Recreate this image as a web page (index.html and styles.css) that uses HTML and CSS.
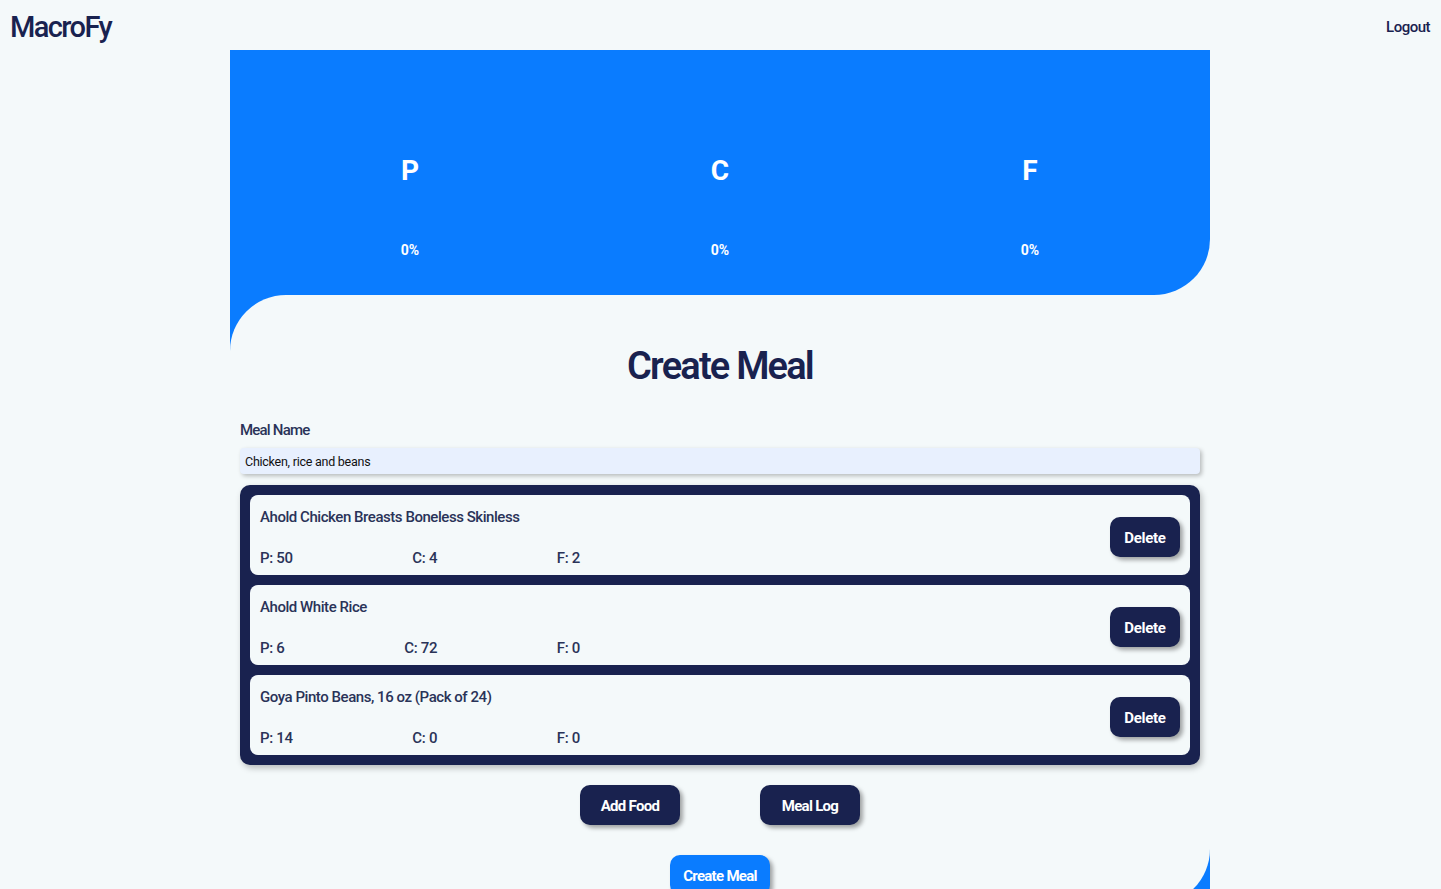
FILE: index.html
```html
<!DOCTYPE html>
<html lang="en">
<head>
<meta charset="utf-8">
<title>MacroFy</title>
<link rel="stylesheet" href="styles.css">
</head>
<body>
<nav class="nav">
  <div class="brand">MacroFy</div>
  <a class="logout" href="#">Logout</a>
</nav>
<main class="wrap">
  <section class="hero">
    <div class="macro"><div class="macro-letter">P</div><div class="macro-pct">0%</div></div>
    <div class="macro"><div class="macro-letter">C</div><div class="macro-pct">0%</div></div>
    <div class="macro"><div class="macro-letter">F</div><div class="macro-pct">0%</div></div>
  </section>
  <section class="panel-bg">
    <div class="panel">
      <h1 class="title">Create Meal</h1>
      <form class="form">
        <label class="label" for="mealName">Meal Name</label>
        <input class="input" id="mealName" type="text" value="Chicken, rice and beans">
        <div class="list">
          <div class="item">
            <div class="item-info">
              <div class="item-name">Ahold Chicken Breasts Boneless Skinless</div>
              <div class="item-macros"><span>P: 50</span><span>C: 4</span><span>F: 2</span></div>
            </div>
            <button class="btn btn-dark btn-del" type="button">Delete</button>
          </div>
          <div class="item">
            <div class="item-info">
              <div class="item-name">Ahold White Rice</div>
              <div class="item-macros"><span>P: 6</span><span>C: 72</span><span>F: 0</span></div>
            </div>
            <button class="btn btn-dark btn-del" type="button">Delete</button>
          </div>
          <div class="item">
            <div class="item-info">
              <div class="item-name">Goya Pinto Beans, 16 oz (Pack of 24)</div>
              <div class="item-macros"><span>P: 14</span><span>C: 0</span><span>F: 0</span></div>
            </div>
            <button class="btn btn-dark btn-del" type="button">Delete</button>
          </div>
        </div>
        <div class="actions">
          <button class="btn btn-dark btn-wide" type="button">Add Food</button>
          <button class="btn btn-dark btn-wide" type="button">Meal Log</button>
        </div>
        <div class="submit-row">
          <button class="btn btn-blue btn-wide" type="submit">Create Meal</button>
        </div>
      </form>
    </div>
  </section>
</main>
</body>
</html>
```
FILE: styles.css
```css
* { box-sizing: border-box; }

html, body {
  margin: 0;
  padding: 0;
}

body {
  background: #f4f9fa;
  color: #19224f;
  font-family: "Roboto", "Liberation Sans", sans-serif;
}

.nav {
  height: 50px;
  display: flex;
  align-items: center;
  justify-content: space-between;
  padding: 4px 11px 0 10px;
}

.brand {
  font-size: 29px;
  font-weight: 500;
  line-height: 36px;
  letter-spacing: -1.6px;
  color: #19224f;
}

.logout {
  font-size: 15px;
  font-weight: 500;
  letter-spacing: -0.5px;
  color: #19224f;
  text-decoration: none;
}

.wrap {
  width: 980px;
  margin-left: calc(50% - 490.5px);
}

.hero {
  height: 245px;
  background: #0a7cff;
  border-bottom-right-radius: 56px;
  display: grid;
  grid-template-columns: repeat(3, 1fr);
  padding: 107px 25px 0;
}

.macro {
  display: flex;
  flex-direction: column;
  align-items: center;
  gap: 58px;
  color: #ffffff;
  font-weight: 700;
}

.macro-letter {
  font-size: 28px;
  line-height: 28px;
}

.macro-pct {
  font-size: 14px;
  line-height: 14px;
}

.panel-bg {
  background: #0a7cff;
}

.panel {
  background: #f4f9fa;
  border-top-left-radius: 56px;
  border-bottom-right-radius: 56px;
  padding: 48px 10px 10px;
}

.title {
  margin: 0;
  text-align: center;
  font-size: 38px;
  line-height: 46px;
  font-weight: 600;
  letter-spacing: -1.8px;
  color: #19224f;
}

.form {
  display: flex;
  flex-direction: column;
  margin-top: 32px;
}

.label {
  font-size: 15px;
  line-height: 18px;
  font-weight: 500;
  letter-spacing: -0.8px;
  color: #2a3358;
}

.input {
  margin-top: 9px;
  height: 26px;
  border: none;
  border-radius: 4px;
  background: #e8f0fe;
  padding: 1px 5px 0;
  font-family: "Roboto", "Liberation Sans", sans-serif;
  font-size: 12.5px;
  letter-spacing: -0.25px;
  color: #111;
  box-shadow: 2px 2px 4px rgba(0, 0, 0, 0.25);
  outline: none;
}

.list {
  margin-top: 11px;
  background: #19224f;
  border-radius: 10px;
  padding: 10px;
  display: flex;
  flex-direction: column;
  gap: 10px;
  box-shadow: 2px 3px 6px rgba(0, 0, 0, 0.25);
}

.item {
  height: 80px;
  background: #f4f9fa;
  border-radius: 8px;
  padding: 13px 10px 9px;
  display: flex;
  align-items: center;
  justify-content: space-between;
}

.item-info {
  display: flex;
  flex-direction: column;
  gap: 22px;
  align-self: flex-start;
}

.item-name,
.item-macros {
  font-size: 15px;
  line-height: 19px;
  font-weight: 500;
  color: #2a3358;
}

.item-name {
  letter-spacing: -0.45px;
}

.item-macros {
  width: 320px;
  display: flex;
  justify-content: space-between;
  letter-spacing: -0.3px;
}

.btn {
  border: none;
  font-family: "Roboto", "Liberation Sans", sans-serif;
  font-weight: 700;
  font-size: 15px;
  color: #ffffff;
  border-radius: 10px;
  cursor: pointer;
  box-shadow: 3px 3px 4px rgba(0, 0, 0, 0.35);
  padding: 2px 0 0;
}

.btn-dark { background: #19224f; }
.btn-blue { background: #0a7cff; }

.btn-del {
  width: 70px;
  height: 40px;
  letter-spacing: -0.3px;
}

.actions {
  margin-top: 20px;
  display: flex;
  justify-content: center;
  gap: 80px;
}

.btn-wide {
  width: 100px;
  height: 40px;
  letter-spacing: -0.7px;
}

.submit-row {
  margin-top: 30px;
  display: flex;
  justify-content: center;
}
```
